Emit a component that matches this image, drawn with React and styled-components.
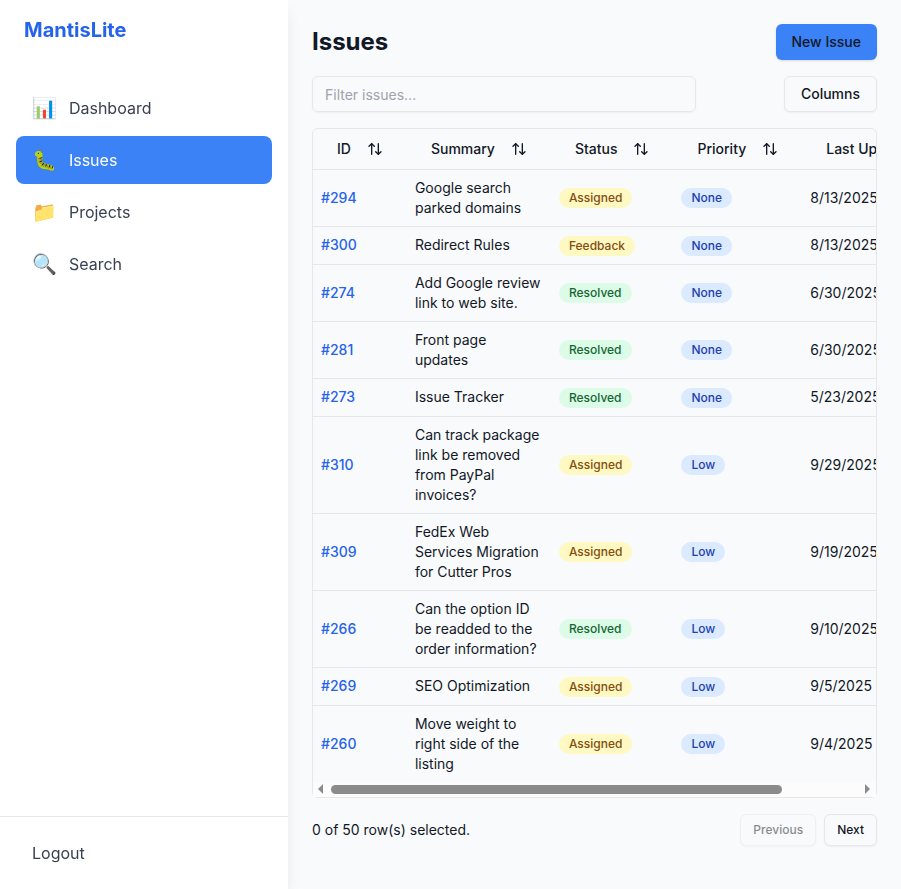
import React from "react";
import styled, { createGlobalStyle, css } from "styled-components";
import { ArrowUpDown } from "lucide-react";

const GlobalStyle = createGlobalStyle`
  *, *::before, *::after { box-sizing: border-box; }
  body {
    margin: 0;
    background: #f9fafb;
    color: #111827;
    font-family: Inter, "Noto Color Emoji", sans-serif;
    font-size: 16px;
    line-height: 24px;
  }
  button, input { font: inherit; color: inherit; }
`;

const Layout = styled.div`
  display: flex;
  height: 889px;
  overflow: hidden;
`;

const Sidebar = styled.aside`
  display: flex;
  flex-direction: column;
  flex: none;
  width: 288px;
  background: #fff;
  color: #374151;
  box-shadow: 0 10px 15px -3px rgba(0, 0, 0, 0.1), 0 4px 6px -4px rgba(0, 0, 0, 0.1);
  z-index: 1;
  will-change: transform;
`;

const Brand = styled.div`
  padding: 16px 24px;
  font-size: 20px;
  line-height: 28px;
  font-weight: 700;
  color: #2563eb;
`;

const Nav = styled.nav`
  display: flex;
  flex-direction: column;
  flex: 1;
  gap: 4px;
  padding: 24px 16px;
`;

const NavItem = styled.a`
  display: flex;
  align-items: center;
  height: 48px;
  padding: 0 16px;
  border-radius: 8px;
  ${(p) => p.$active && css`
    background: #3b82f6;
    color: #fff;
  `}
`;

const NavIcon = styled.span`
  margin-right: 12px;
  font-size: 20px;
  line-height: 28px;
`;

const SidebarFooter = styled.div`
  padding: 16px;
  border-top: 1px solid #e5e7eb;
`;

const LogoutLink = styled.a`
  display: block;
  padding: 8px 16px;
`;

const Main = styled.main`
  display: flex;
  flex-direction: column;
  flex: 1;
  min-width: 0;
  padding: 24px;
  gap: 16px;
`;

const Bar = styled.div`
  display: flex;
  align-items: center;
  justify-content: space-between;
`;

const Title = styled.h1`
  margin: 0;
  font-size: 24px;
  line-height: 32px;
  font-weight: 700;
`;

const Button = styled.button`
  display: inline-flex;
  align-items: center;
  justify-content: center;
  height: ${(p) => (p.$small ? 32 : 36)}px;
  padding: 0 ${(p) => (p.$small ? 12 : 16)}px;
  border: 1px solid #e5e7eb;
  border-radius: 6px;
  background: #f9fafb;
  box-shadow: 0 1px 2px rgba(0, 0, 0, 0.05);
  font-size: ${(p) => (p.$small ? 12 : 14)}px;
  line-height: 20px;
  font-weight: 500;
  &:disabled { opacity: 0.5; }
  ${(p) => p.$primary && css`
    border: 0;
    background: #3b82f6;
    box-shadow: 0 1px 3px rgba(0, 0, 0, 0.1), 0 1px 2px -1px rgba(0, 0, 0, 0.1);
  `}
`;

const FilterInput = styled.input`
  width: 384px;
  height: 36px;
  padding: 4px 12px;
  border: 1px solid #e5e7eb;
  border-radius: 6px;
  background: transparent;
  box-shadow: 0 1px 2px rgba(0, 0, 0, 0.05);
  font-size: 14px;
  line-height: 20px;
  &::placeholder { color: #9ca3af; }
`;

const TableFrame = styled.div`
  border: 1px solid #e5e7eb;
  border-radius: 6px;
`;

const TableViewport = styled.div`
  overflow: hidden;
`;

const Table = styled.table`
  width: 100%;
  border-collapse: collapse;
  font-size: 14px;
  line-height: 20px;
`;

const Row = styled.tr`
  border-bottom: 1px solid #e5e7eb;
  tbody &:last-child { border-bottom: 0; }
`;

const HeadCell = styled.th`
  height: 40px;
  padding: 0 8px;
  text-align: left;
  font-weight: 500;
`;

const SortButton = styled.button`
  display: inline-flex;
  align-items: center;
  gap: 16px;
  height: 36px;
  padding: 0 16px;
  border: 0;
  background: none;
  white-space: nowrap;
  vertical-align: middle;
`;

const Cell = styled.td`
  padding: 8px;
  vertical-align: middle;
`;

const IssueLink = styled.a`
  color: #2563eb;
  font-weight: 500;
`;

const tones = {
  Assigned: ["#fef9c3", "#854d0e"],
  Feedback: ["#fef9c3", "#854d0e"],
  Resolved: ["#dcfce7", "#166534"],
  None: ["#dbeafe", "#1e40af"],
  Low: ["#dbeafe", "#1e40af"],
};

const Badge = styled.span`
  display: inline-flex;
  align-items: center;
  padding: 2px 10px;
  border-radius: 999px;
  font-size: 12px;
  line-height: 16px;
  font-weight: 500;
  background: ${(p) => tones[p.$tone][0]};
  color: ${(p) => tones[p.$tone][1]};
`;

const ScrollTrack = styled.div`
  display: flex;
  align-items: center;
  height: 15px;
  padding: 0 6px 0 5px;
  background: #fcfcfc;
`;

const ScrollArrow = styled.svg`
  flex: none;
  width: 5px;
  height: 10px;
  fill: #8b8b8b;
`;

const ScrollLane = styled.div`
  flex: 1;
  padding: 0 8px;
`;

const ScrollThumb = styled.div`
  width: 451px;
  height: 9px;
  border-radius: 5px;
  background: #8b8b8b;
`;

const RowCount = styled.div`
  font-size: 14px;
  line-height: 20px;
`;

const Pager = styled.div`
  display: flex;
  gap: 8px;
`;

const navItems = [
  ["📊", "Dashboard"],
  ["🐛", "Issues"],
  ["📁", "Projects"],
  ["🔍", "Search"],
];

const columns = ["ID", "Summary", "Status", "Priority", "Last Updated"];

const issues = [
  [294, "Google search parked domains", "Assigned", "None", "8/13/2025"],
  [300, "Redirect Rules", "Feedback", "None", "8/13/2025"],
  [274, "Add Google review link to web site.", "Resolved", "None", "6/30/2025"],
  [281, "Front page updates", "Resolved", "None", "6/30/2025"],
  [273, "Issue Tracker", "Resolved", "None", "5/23/2025"],
  [310, "Can track package link be removed from PayPal invoices?", "Assigned", "Low", "9/29/2025"],
  [309, "FedEx Web Services Migration for Cutter Pros", "Assigned", "Low", "9/19/2025"],
  [266, "Can the option ID be readded to the order information?", "Resolved", "Low", "9/10/2025"],
  [269, "SEO Optimization", "Assigned", "Low", "9/5/2025"],
  [260, "Move weight to right side of the listing", "Assigned", "Low", "9/4/2025"],
];

export default function App() {
  return (
    <>
      <GlobalStyle />
      <Layout>
        <Sidebar>
          <Brand>MantisLite</Brand>
          <Nav>
            {navItems.map(([icon, label]) => (
              <NavItem key={label} $active={label === "Issues"}>
                <NavIcon>{icon}</NavIcon>
                {label}
              </NavItem>
            ))}
          </Nav>
          <SidebarFooter>
            <LogoutLink>Logout</LogoutLink>
          </SidebarFooter>
        </Sidebar>
        <Main>
          <Bar>
            <Title>Issues</Title>
            <Button $primary>New Issue</Button>
          </Bar>
          <Bar>
            <FilterInput placeholder="Filter issues..." />
            <Button>Columns</Button>
          </Bar>
          <TableFrame>
            <TableViewport>
              <Table>
                <thead>
                  <Row>
                    {columns.map((label) => (
                      <HeadCell key={label}>
                        <SortButton>
                          {label}
                          <ArrowUpDown size={16} />
                        </SortButton>
                      </HeadCell>
                    ))}
                  </Row>
                </thead>
                <tbody>
                  {issues.map(([id, summary, status, priority, updated]) => (
                    <Row key={id}>
                      <Cell><IssueLink>#{id}</IssueLink></Cell>
                      <Cell>{summary}</Cell>
                      <Cell><Badge $tone={status}>{status}</Badge></Cell>
                      <Cell><Badge $tone={priority}>{priority}</Badge></Cell>
                      <Cell>{updated}</Cell>
                    </Row>
                  ))}
                </tbody>
              </Table>
            </TableViewport>
            <ScrollTrack>
              <ScrollArrow viewBox="0 0 5 10"><path d="M5 0v10L0 5z" /></ScrollArrow>
              <ScrollLane><ScrollThumb /></ScrollLane>
              <ScrollArrow viewBox="0 0 5 10"><path d="M0 0v10l5-5z" /></ScrollArrow>
            </ScrollTrack>
          </TableFrame>
          <Bar>
            <RowCount>0 of 50 row(s) selected.</RowCount>
            <Pager>
              <Button $small disabled>Previous</Button>
              <Button $small>Next</Button>
            </Pager>
          </Bar>
        </Main>
      </Layout>
    </>
  );
}
